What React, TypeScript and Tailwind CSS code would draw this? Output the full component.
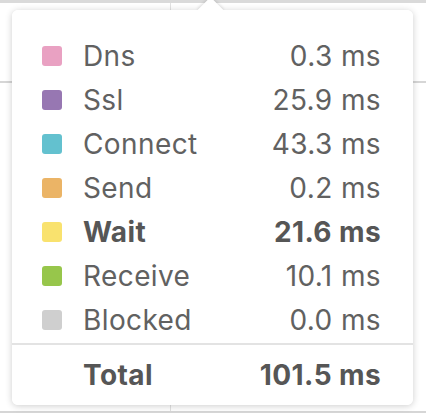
const rows = [
  { name: "Dns", value: "0.3 ms", color: "bg-[#e9a1c2]" },
  { name: "Ssl", value: "25.9 ms", color: "bg-[#9777b2]" },
  { name: "Connect", value: "43.3 ms", color: "bg-[#63c1cf]" },
  { name: "Send", value: "0.2 ms", color: "bg-[#ebb466]" },
  { name: "Wait", value: "21.6 ms", color: "bg-[#f9e26e]", bold: true },
  { name: "Receive", value: "10.1 ms", color: "bg-[#97c64b]" },
  { name: "Blocked", value: "0.0 ms", color: "bg-[#cfcfcf]" },
];

const App: React.FC = () => {
  return (
    <div
      className="relative w-[426px] h-[416px] overflow-hidden bg-white"
      style={{ fontFamily: "Inter, 'Liberation Sans', sans-serif" }}
    >
      {/* table grid behind the popup */}
      <div className="border-t-[3px] border-[#dadada]">
        <div className="flex h-[80px] border-b-2 border-[#d6d6d6]">
          <div className="w-[171px] border-r border-[#e2e2e2]" />
          <div className="flex-1" />
        </div>
        <div className="flex h-[330px] border-b-2 border-[#d6d6d6]">
          <div className="w-[171px] border-r border-[#e2e2e2]" />
          <div className="flex-1" />
        </div>
      </div>

      {/* tooltip */}
      <div className="absolute left-[12px] top-[10px] w-[401px] h-[395px] bg-white rounded-[6px] shadow-[0_1px_7px_rgba(0,0,0,0.2)]">
        <div className="absolute left-[189px] top-[-9px] w-[19px] h-[19px] rotate-45 bg-white shadow-[-1px_-1px_3px_rgba(0,0,0,0.12)]" />
        <div className="relative bg-white rounded-[6px] h-full flex flex-col">
          <div className="pt-[24px] pb-[1px] px-[30px] pr-[32px]">
            {rows.map((r) => (
              <div key={r.name} className="flex items-center h-[44px] text-[28px] tracking-[0.4px] text-[#616161]">
                <div className={`w-[20px] h-[20px] rounded-[3px] ${r.color}`} />
                <div className={`ml-[21px] flex-1 ${r.bold ? "font-bold text-[#565656]" : ""}`}>{r.name}</div>
                <div className={r.bold ? "font-bold text-[#565656]" : ""}>{r.value}</div>
              </div>
            ))}
          </div>
          <div className="border-t-2 border-[#e3e3e3] flex-1 flex items-center pl-[71px] pr-[32px] text-[28px] tracking-[0.4px] font-bold text-[#565656]">
            <div className="flex-1">Total</div>
            <div>101.5 ms</div>
          </div>
        </div>
      </div>
    </div>
  );
};

export default App;
